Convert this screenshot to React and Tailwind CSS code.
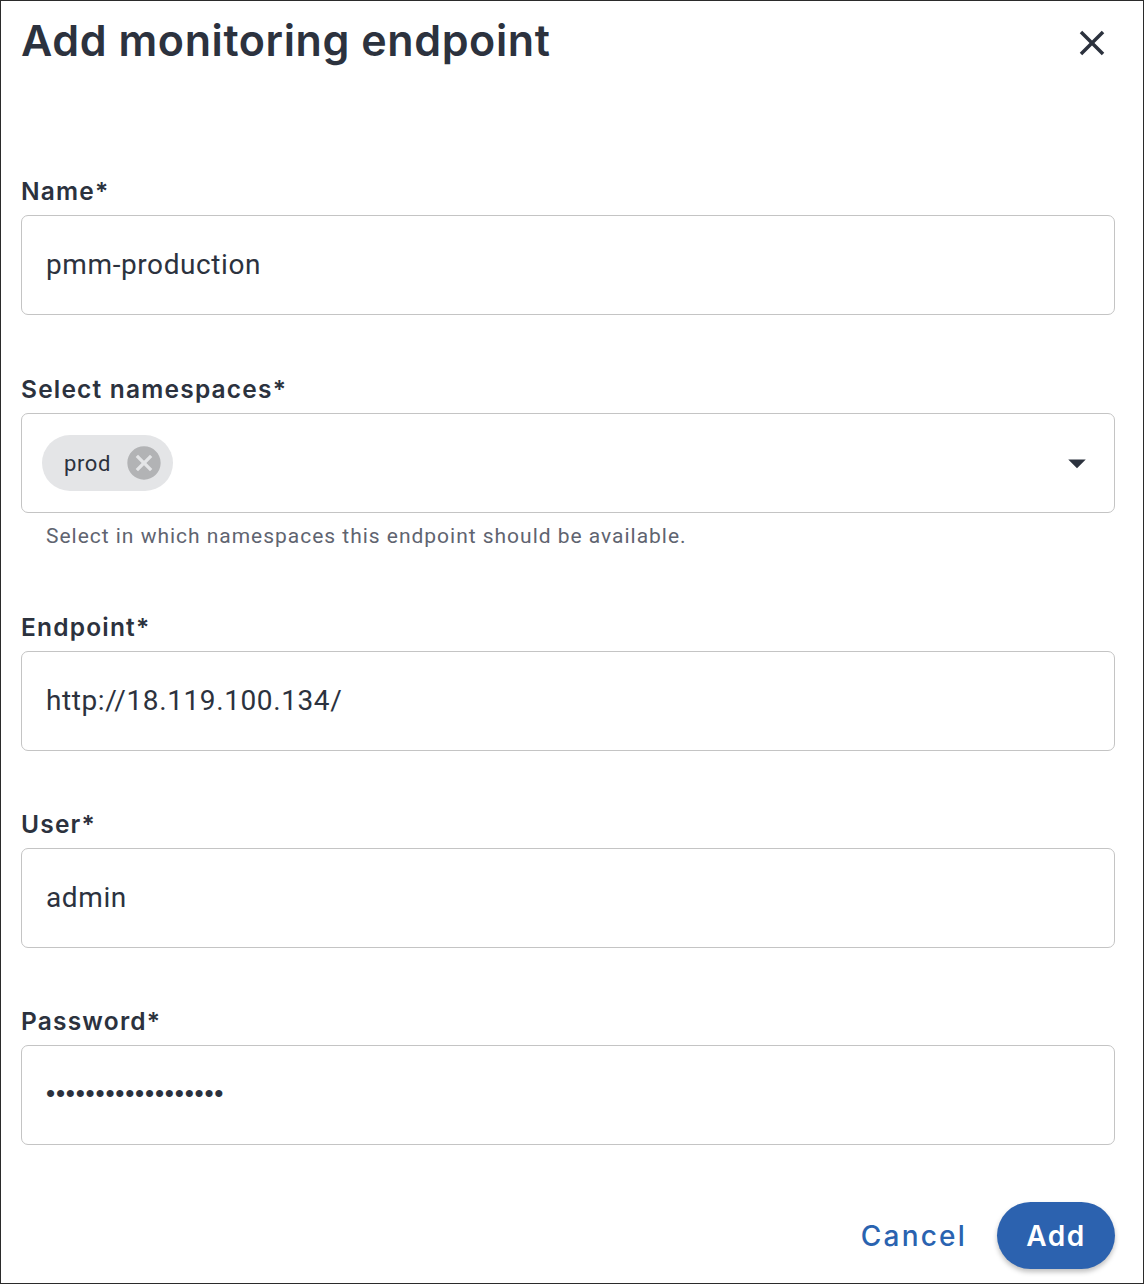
import React from "react";

const HEAD = { fontFamily: "Inter, 'Noto Sans', sans-serif" };
const BODY = { fontFamily: "Roboto, 'Liberation Sans', sans-serif" };

function Label({ children }) {
  return (
    <div className="h-[32px] leading-[32px] text-[24.5px] font-semibold text-[#2c323e] mb-[8px] tracking-[1.2px]" style={HEAD}>
      {children}
    </div>
  );
}

function Field({ label, value, mt }) {
  return (
    <div className={mt}>
      <Label>{label}</Label>
      <div className="h-[100px] w-full rounded-[7px] border border-[#c4c4c4] flex items-center px-[24px]">
        <span className="text-[28px] text-[#2c323e] tracking-[0.6px]" style={BODY}>{value}</span>
      </div>
    </div>
  );
}

export default function App() {
  return (
    <div className="w-[1144px] h-[1284px] border border-[#2b2b2b] bg-white pl-[20px] pr-[28px] flex flex-col">
      <div className="h-[78px] flex items-center justify-between">
        <h1 className="text-[43px] font-semibold text-[#2c323e] leading-none tracking-[0.6px]" style={HEAD}>
          Add monitoring endpoint
        </h1>
        <svg width="42" height="42" viewBox="0 0 24 24" className="mr-[2px] mt-[6px]">
          <path fill="#2c323e" d="M19 6.41 17.59 5 12 10.59 6.41 5 5 6.41 10.59 12 5 17.59 6.41 19 12 13.41 17.59 19 19 17.59 13.41 12z" />
        </svg>
      </div>

      <div className="mt-[96px]">
        <Field label="Name*" value="pmm-production" />
      </div>

      <div className="mt-[58px]">
        <Label>Select namespaces*</Label>
        <div className="h-[100px] w-full rounded-[7px] border border-[#c4c4c4] flex items-center pl-[20px] pr-[16px] justify-between">
          <div className="h-[56px] rounded-full bg-[#e4e5e7] flex items-center pl-[22px] pr-[12px]">
            <span className="text-[22px] text-[#2c323e] mr-[16px] tracking-[0.6px]" style={BODY}>prod</span>
            <svg width="40" height="40" viewBox="0 0 24 24" className="-mx-[3px]">
              <path fill="#b2b3b5" d="M12 2C6.47 2 2 6.47 2 12s4.47 10 10 10 10-4.47 10-10S17.53 2 12 2zm5 13.59L15.59 17 12 13.41 8.41 17 7 15.59 10.59 12 7 8.41 8.41 7 12 10.59 15.59 7 17 8.41 13.41 12 17 15.59z" />
            </svg>
          </div>
          <svg width="42" height="42" viewBox="0 0 24 24">
            <path fill="#2c323e" d="M7 10l5 5 5-5z" />
          </svg>
        </div>
        <div className="pl-[25px] mt-[9px] h-[28px] leading-[28px] text-[21px] text-[#5f6470] tracking-[0.98px]" style={BODY}>
          Select in which namespaces this endpoint should be available.
        </div>
      </div>

      <Field label="Endpoint*" value="http://18.119.100.134/" mt="mt-[61px]" />
      <Field label="User*" value="admin" mt="mt-[57px]" />
      <div className="mt-[57px]">
        <Label>Password*</Label>
        <div className="h-[100px] w-full rounded-[7px] border border-[#c4c4c4] flex items-center px-[24px]">
          <span className="text-[26px] text-[#2c323e] tracking-[0.8px] -mt-[4px]" style={{ fontFamily: "'Liberation Sans', sans-serif" }}>
            {"•".repeat(18)}
          </span>
        </div>
      </div>

      <div className="mt-[57px] flex justify-end items-center gap-[14px]">
        <button className="h-[67px] px-[16px] text-[28px] font-medium text-[#2a63b0] tracking-[2.2px]" style={HEAD}>
          Cancel
        </button>
        <button className="h-[67px] w-[118px] rounded-full bg-[#2c62af] text-white text-[28px] font-semibold tracking-[1.5px] shadow-[0_3px_5px_rgba(0,0,0,0.25)]" style={HEAD}>
          Add
        </button>
      </div>
    </div>
  );
}
